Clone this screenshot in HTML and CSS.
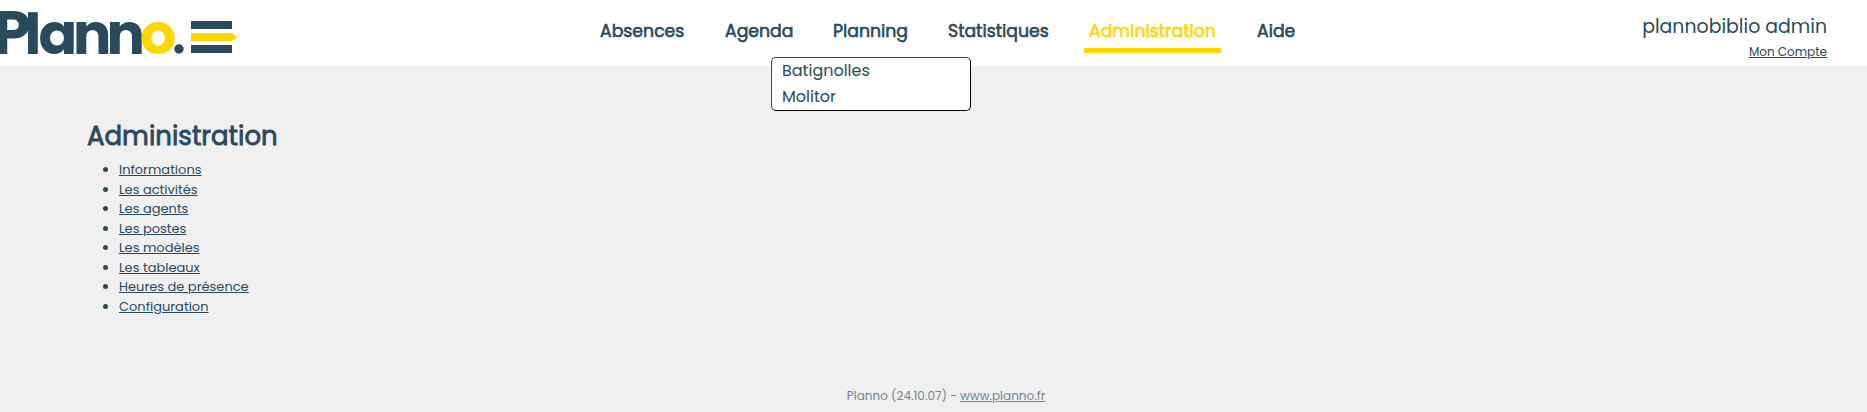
FILE: index.html
```
<!DOCTYPE html>
<html lang="fr">
<head>
  <meta charset="UTF-8">
  <meta name="viewport" content="width=device-width, initial-scale=1.0">
  <title>Planno</title>
  <link rel="stylesheet" href="styles.css">
</head>
<body>
  <header class="header">
    <a class="logo" href="#">
      <svg width="240" height="66" viewBox="0 0 240 66">
        <text class="logo-text" y="53.5" x="-7 24.5 38.5 73 106.5 140"><tspan class="logo-p">P</tspan>lann<tspan class="logo-o">o</tspan></text>
        <circle cx="179" cy="49" r="4.7" fill="#294a5c"/>
        <path d="M191 21h41v8h-41zM191 45h41v8h-41z" fill="#294a5c"/>
        <path d="M191 33h41l5 4-5 4h-41z" fill="#ffd600"/>
      </svg>
    </a>
    <nav class="nav">
      <a class="absences" href="#">Absences</a>
      <a class="agenda" href="#">Agenda</a>
      <a class="planning" href="#">Planning</a>
      <a class="statistiques" href="#">Statistiques</a>
      <a class="administration active" href="#">Administration</a>
      <a class="aide" href="#">Aide</a>
    </nav>
    <!-- sous-menu Planning -->
    <ul class="submenu">
      <li>Batignolles</li>
      <li>Molitor</li>
    </ul>
    <div class="user">
      <span class="login">plannobiblio admin</span>
      <a class="account" href="#">Mon Compte</a>
    </div>
  </header>
  <main class="content">
    <h1>Administration</h1>
    <ul class="links">
      <li><a href="#">Informations</a></li>
      <li><a href="#">Les activités</a></li>
      <li><a href="#">Les agents</a></li>
      <li><a href="#">Les postes</a></li>
      <li><a href="#">Les modèles</a></li>
      <li><a href="#">Les tableaux</a></li>
      <li><a href="#">Heures de présence</a></li>
      <li><a href="#">Configuration</a></li>
    </ul>
  </main>
  <footer class="footer">Planno (24.10.07) - <a href="#">www.planno.fr</a></footer>
</body>
</html>
```
FILE: styles.css
```
* {
  box-sizing: border-box;
}
body {
  margin: 0;
  height: 412px;
  display: flex;
  flex-direction: column;
  background-color: #f0f0f0;
  color: #294a5c;
  font-family: Poppins, Inter, sans-serif;
  overflow: hidden;
}
a {
  color: inherit;
}
ul {
  margin: 0;
  padding: 0;
}

/* Header */
.header {
  position: relative;
  display: flex;
  height: 66px;
  background-color: #fff;
}
.logo {
  width: 595px;
}
.logo svg {
  display: block;
}
.logo-text {
  font-size: 57px;
  font-weight: 700;
  fill: #294a5c;
}
.logo-text .logo-p {
  font-size: 61px;
}
.logo-text .logo-o {
  fill: #ffd600;
}
.nav {
  display: flex;
  gap: 31px;
  padding-top: 14px;
}
.nav a {
  height: 39px;
  padding: 0 5px;
  font-size: 17.3px;
  font-weight: 400;
  -webkit-text-stroke: 0.6px;
  line-height: 34px;
  white-space: nowrap;
  text-decoration: none;
}
.nav .absences { width: 94px; }
.nav .agenda { width: 77px; }
.nav .planning { width: 84px; }
.nav .statistiques { width: 110px; }
.nav .administration { width: 137px; }
.nav .aide { width: 48px; }
.nav .active {
  color: #ffd600;
  border-bottom: 5px solid #ffd600;
}
.submenu {
  position: absolute;
  left: 771px;
  top: 57px;
  width: 200px;
  height: 54px;
  padding-left: 10px;
  border: 1px solid;
  border-color: #294a5c #000 #000 #294a5c;
  border-radius: 5px;
  background-color: #fff;
  font-size: 16px;
  line-height: 26px;
  list-style: none;
}
.user {
  display: flex;
  flex-direction: column;
  align-items: flex-end;
  margin-left: auto;
  padding: 12px 40px 0 0;
}
.login {
  font-size: 18.9px;
  line-height: 30px;
}
.account {
  font-size: 12px;
  line-height: 20px;
}

/* Contenu */
.content {
  flex: 1;
  padding: 51px 87px 0;
}
h1 {
  margin: 0;
  font-size: 26px;
  font-weight: 400;
  -webkit-text-stroke: 0.8px;
  line-height: 38px;
}
.links {
  margin-top: 5px;
  padding-left: 32px;
  font-size: 13px;
  line-height: 19.55px;
}
.footer {
  height: 33px;
  padding-left: 25px;
  font-size: 12px;
  line-height: 34px;
  text-align: center;
  color: #738793;
}
```
